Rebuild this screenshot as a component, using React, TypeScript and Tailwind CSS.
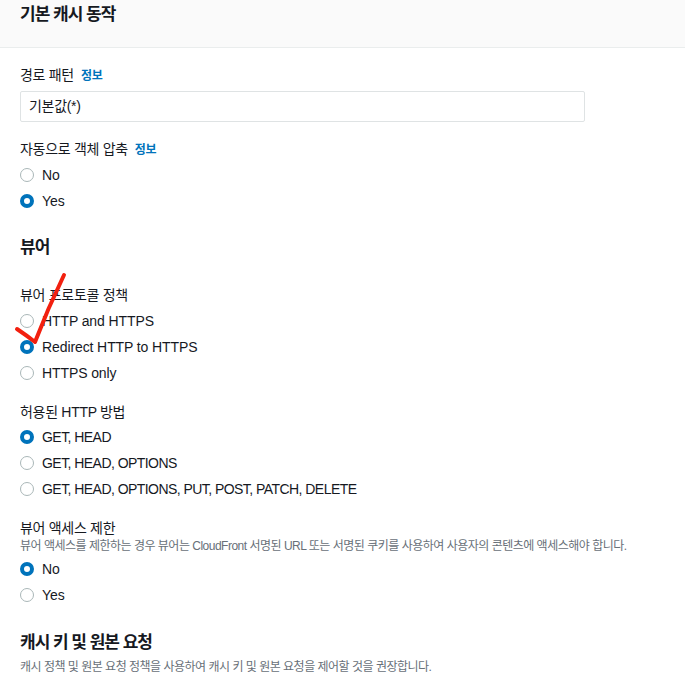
import React from 'react';

const ko = '"Liberation Sans", "Noto Sans CJK KR", sans-serif';

function Radio({ label, checked, tight }: { label: string; checked?: boolean; tight?: boolean }) {
    return (
        <div className="flex h-[26px] items-center gap-[8px]">
            <span
                className={
                    checked
                        ? 'h-[14px] w-[14px] rounded-full border-[4px] border-[#0073bb] bg-white'
                        : 'h-[14px] w-[14px] rounded-full border border-[#aab7b8] bg-white'
                }
            />
            <span
                className={
                    tight
                        ? 'text-[14px] leading-[20px] tracking-[-0.55px] text-[#16191f]'
                        : 'text-[14px] leading-[20px] tracking-[-0.1px] text-[#16191f]'
                }
            >
                {label}
            </span>
        </div>
    );
}

function Label({ text, info }: { text: string; info?: boolean }) {
    return (
        <div className="flex items-baseline gap-[7px] text-[14px] leading-[20px] tracking-[-0.3px] text-[#16191f]">
            <span>{text}</span>
            {info && <span className="text-[12px] font-bold text-[#0073bb]">정보</span>}
        </div>
    );
}

export default function App() {
    return (
        <div className="relative min-h-screen bg-white" style={{ fontFamily: ko }}>
            {/* Section header */}
            <div className="h-[48px] border-b border-[#eaeded] bg-[#fafafa] px-5 pt-[3px]">
                <h2 className="text-[17px] font-bold leading-[24px] tracking-[-1px] text-[#16191f]">기본 캐시 동작</h2>
            </div>

            <div className="flex flex-col px-5">
                <div className="mt-[17px]">
                    <Label text="경로 패턴" info />
                </div>
                <div className="mt-[5px] flex h-[31px] w-[565px] items-center rounded-[2px] border border-[#dfe3e4] px-[8px] text-[14px] tracking-[-0.3px] text-[#16191f]">
                    기본값(*)
                </div>

                <div className="mt-[17px]">
                    <Label text="자동으로 객체 압축" info />
                </div>
                <div className="mt-[2px]">
                    <Radio label="No" />
                    <Radio label="Yes" checked />
                </div>

                <h2 className="mt-[22px] text-[17px] font-bold leading-[24px] tracking-[-1px] text-[#16191f]">뷰어</h2>

                <div className="mt-[25px]">
                    <Label text="뷰어 프로토콜 정책" />
                </div>
                <div className="mt-[3px]">
                    <Radio label="HTTP and HTTPS" />
                    <Radio label="Redirect HTTP to HTTPS" checked />
                    <Radio label="HTTPS only" />
                </div>

                <div className="mt-[16px]">
                    <Label text="허용된 HTTP 방법" />
                </div>
                <div className="mt-[2px]">
                    <Radio label="GET, HEAD" checked tight />
                    <Radio label="GET, HEAD, OPTIONS" tight />
                    <Radio label="GET, HEAD, OPTIONS, PUT, POST, PATCH, DELETE" tight />
                </div>

                <div className="mt-[16px]">
                    <Label text="뷰어 액세스 제한" />
                </div>
                <p className="text-[12px] leading-[16px] tracking-[-0.5px] text-[#687078]">
                    뷰어 액세스를 제한하는 경우 뷰어는 CloudFront 서명된 URL 또는 서명된 쿠키를 사용하여 사용자의 콘텐츠에 액세스해야 합니다.
                </p>
                <div className="mt-[2px]">
                    <Radio label="No" checked />
                    <Radio label="Yes" />
                </div>

                <h2 className="mt-[23px] text-[17px] font-bold leading-[24px] tracking-[-1px] text-[#16191f]">캐시 키 및 원본 요청</h2>
                <p className="mt-[4px] text-[12px] leading-[16px] tracking-[-0.5px] text-[#687078]">
                    캐시 정책 및 원본 요청 정책을 사용하여 캐시 키 및 원본 요청을 제어할 것을 권장합니다.
                </p>
            </div>

            {/* hand-drawn red check mark */}
            <svg className="pointer-events-none absolute left-[12px] top-[270px]" width="60" height="80" viewBox="0 0 60 80">
                <path
                    d="M5 59 Q 14 65 23 72 Q 36 38 52 5"
                    fill="none"
                    stroke="#f2200f"
                    strokeWidth="4"
                    strokeLinecap="round"
                    strokeLinejoin="round"
                />
            </svg>
        </div>
    );
}
